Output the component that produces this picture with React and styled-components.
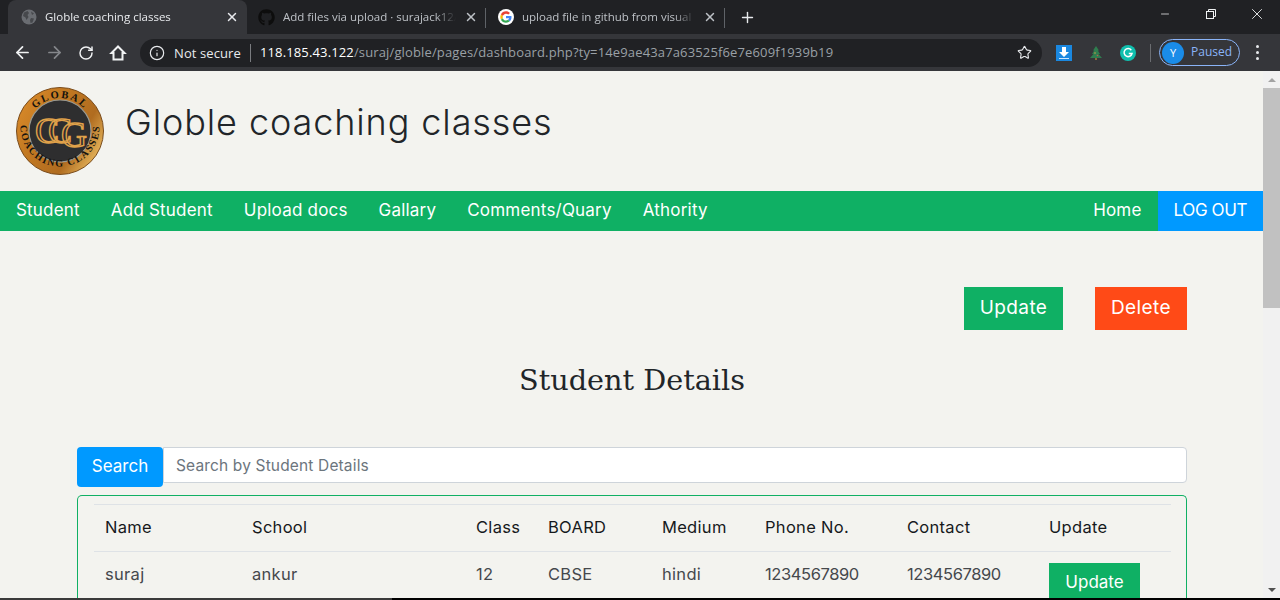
import React from "react"
import styled, { createGlobalStyle } from "styled-components"
import { ArrowLeft, ArrowRight, RotateCw, Star, Info, X, Plus, Minus } from "lucide-react"
import { FaGithub } from "react-icons/fa"

const sans = `Inter, "Noto Sans", sans-serif`
const chromeFont = `"Open Sans", "Noto Sans", sans-serif`

const GlobalStyle = createGlobalStyle`
  html, body {
    margin: 0;
    padding: 0;
    height: 600px;
    overflow: hidden;
    background: #f3f3ef;
  }
  * { box-sizing: border-box; }
`

const Screen = styled.div`
  width: 1280px;
  height: 600px;
  display: flex;
  flex-direction: column;
  overflow: hidden;
`

const TabStrip = styled.div`
  height: 34px;
  flex: none;
  background: #202124;
  display: flex;
  align-items: stretch;
  padding-left: 8px;
  font-family: ${chromeFont};
  font-size: 11.5px;
`

const Tab = styled.div`
  width: ${p => p.$width}px;
  flex: none;
  display: flex;
  align-items: center;
  gap: 8px;
  padding: 0 8px 0 ${p => p.$left}px;
  color: ${p => (p.$active ? "#e8eaed" : "#bdc1c6")};
  background: ${p => (p.$active ? "#35363a" : "transparent")};
  border-radius: 8px 8px 0 0;
  position: relative;
  &::after {
    content: "";
    display: ${p => (p.$divider ? "block" : "none")};
    position: absolute;
    right: 0;
    top: 8px;
    width: 1px;
    height: 20px;
    background: #5f6368;
  }
`

const TabTitle = styled.span`
  flex: 1;
  padding-bottom: 2px;
  white-space: nowrap;
  overflow: hidden;
  -webkit-mask-image: linear-gradient(to right, #000 88%, transparent);
  mask-image: linear-gradient(to right, #000 88%, transparent);
`

const NewTab = styled.div`
  width: 44px;
  display: flex;
  align-items: center;
  justify-content: center;
  color: #e8eaed;
`

const WindowControls = styled.div`
  margin-left: auto;
  display: flex;
  align-items: flex-start;
  color: #f1f3f4;
`

const WindowButton = styled.div`
  width: 46px;
  height: 28px;
  display: flex;
  align-items: center;
  justify-content: center;
`

const Toolbar = styled.div`
  height: 37px;
  flex: none;
  background: #35363a;
  display: flex;
  align-items: center;
  padding: 0 0 0 6px;
  font-family: ${chromeFont};
  color: #e8eaed;
`

const NavIcon = styled.div`
  width: 32px;
  height: 28px;
  display: flex;
  align-items: center;
  justify-content: center;
  color: ${p => (p.$muted ? "#85878b" : "#f1f3f4")};
`

const Omnibox = styled.div`
  width: 902px;
  height: 28px;
  margin-left: 6px;
  background: #202124;
  border-radius: 14px;
  display: flex;
  align-items: center;
  padding: 0 10px 0 9px;
  font-size: 13px;
  white-space: nowrap;
`

const Secure = styled.span`
  margin-left: 9px;
  padding-right: 9px;
  border-right: 1px solid #7a7c80;
  line-height: 18px;
  letter-spacing: 0.1px;
`

const Url = styled.span`
  margin-left: 9px;
  padding-bottom: 2px;
  color: #9aa0a6;
  flex: 1;
  letter-spacing: 0.14px;
  b { color: #fff; font-weight: 400; }
`

const Extensions = styled.div`
  display: flex;
  align-items: center;
  margin-left: 6px;
`

const ExtSlot = styled.div`
  width: 32px;
  height: 28px;
  display: flex;
  align-items: center;
  justify-content: center;
`

const ToolbarDivider = styled.div`
  width: 1px;
  height: 18px;
  background: #6b6d71;
  margin: 0 8px 0 6px;
`

const Profile = styled.div`
  width: 81px;
  height: 27px;
  border: 1px solid #8ab4f8;
  border-radius: 14px;
  display: flex;
  align-items: center;
  padding-left: 2px;
  font-size: 12px;
  color: #8ab4f8;
`

const PausedLabel = styled.span`
  padding-bottom: 2px;
`

const Avatar = styled.div`
  width: 22px;
  height: 22px;
  border-radius: 50%;
  background: #1a8ce8;
  color: #fff;
  display: flex;
  align-items: center;
  justify-content: center;
  font-size: 11px;
  margin-right: 7px;
`

const MenuDots = styled.div`
  margin-left: 16px;
  display: flex;
  flex-direction: column;
  gap: 3px;
  span {
    width: 3px;
    height: 3px;
    background: #e8eaed;
    border-radius: 50%;
  }
`

const Viewport = styled.div`
  flex: 1;
  min-height: 0;
  display: flex;
  overflow: hidden;
`

const Page = styled.div`
  flex: 1;
  min-width: 0;
  background: #f3f3ef;
  font-family: ${sans};
  color: #212529;
`

const Header = styled.header`
  height: 120px;
  display: flex;
  align-items: center;
  padding: 0 0 0 16px;
  gap: 21px;
`

const Title = styled.h1`
  margin: 0 0 16px;
  font-size: 36px;
  font-weight: 300;
  letter-spacing: 0.9px;
  line-height: 1.2;
`

const NavBar = styled.nav`
  height: 40px;
  background: #0fb064;
  display: flex;
  align-items: stretch;
  font-size: 17px;
  letter-spacing: 0.2px;
  color: #fff;
`

const NavLink = styled.a`
  display: flex;
  align-items: center;
  padding: 0 16px 2px;
  margin-right: ${p => (p.$primary || p.$push ? "0" : "-1px")};
  color: #fff;
  background: ${p => (p.$primary ? "#0099ff" : "transparent")};
  margin-left: ${p => (p.$push ? "auto" : "0")};
  letter-spacing: ${p => (p.$primary ? "-0.4px" : "inherit")};
`

const Content = styled.main`
  width: 1110px;
  margin-left: 77px;
`

const Actions = styled.div`
  display: flex;
  justify-content: flex-end;
  gap: 32px;
  padding-top: 56px;
`

const Button = styled.button`
  border: 0;
  height: ${p => p.$height || 43}px;
  width: ${p => p.$width}px;
  background: ${p => p.$bg || "#0fb064"};
  color: #fff;
  font-family: ${sans};
  font-size: 19px;
  letter-spacing: 0.4px;
  padding: 0 0 2px;
`

const Heading = styled.h2`
  margin: 29px 0 0;
  height: 88px;
  text-align: center;
  font-family: "DejaVu Serif", serif;
  font-weight: 400;
  font-size: 28.7px;
  line-height: 42px;
  color: #212529;
`

const SearchRow = styled.div`
  display: flex;
  align-items: flex-start;
`

const SearchButton = styled.button`
  width: 86px;
  height: 40px;
  border: 0;
  border-radius: 4px;
  background: #0099ff;
  color: #fff;
  font-family: ${sans};
  font-size: 17px;
  padding: 0 0 3px;
`

const SearchInput = styled.input`
  flex: 1;
  height: 36px;
  border: 1px solid #ced4da;
  border-radius: 0 4px 4px 0;
  background: #fff;
  padding: 0 12px;
  font-family: ${sans};
  font-size: 15.5px;
  letter-spacing: 0.15px;
  outline: 0;
  &::placeholder { color: #6c757d; opacity: 1; }
`

const Card = styled.section`
  margin-top: 8px;
  height: 130px;
  border: 1px solid #0fb064;
  border-bottom: 0;
  border-radius: 5px 5px 0 0;
  padding: 8px 15px 0 16px;
`

const Table = styled.table`
  width: 1077px;
  table-layout: fixed;
  border-collapse: collapse;
  font-size: 16.5px;
`

const HeadCell = styled.th`
  width: ${p => p.$width}px;
  height: 47px;
  padding: 0 0 3px 11px;
  text-align: left;
  font-weight: 400;
  letter-spacing: 0.3px;
  color: #16191c;
  border-top: 1px solid #dee2e6;
  border-bottom: 1px solid #dee2e6;
`

const Cell = styled.td`
  padding: 10px 0 0 11px;
  vertical-align: top;
  color: #45484c;
  line-height: 24px;
  letter-spacing: ${p => (p.$digits ? "-0.4px" : "0.3px")};
`

const RowButton = styled(Button)`
  display: block;
  margin-top: 1px;
  font-size: 17px;
  letter-spacing: 0;
  padding: 0;
`

const Scrollbar = styled.div`
  width: 17px;
  flex: none;
  background: #f1f1f1;
  display: flex;
  flex-direction: column;
  align-items: center;
`

const ScrollArrow = styled.div`
  height: 17px;
  flex: none;
  display: flex;
  align-items: center;
  justify-content: center;
  &::before {
    content: "";
    border-left: 4px solid transparent;
    border-right: 4px solid transparent;
    border-bottom: ${p => (p.$down ? "0" : "4px solid #a3a3a3")};
    border-top: ${p => (p.$down ? "4px solid #505050" : "0")};
  }
`

const ScrollThumb = styled.div`
  width: 100%;
  height: 220px;
  background: #c1c1c1;
`

const ScrollTrack = styled.div`
  flex: 1;
`

const BottomEdge = styled.div`
  height: 2px;
  flex: none;
  background: #000;
  &::before {
    content: "";
    display: block;
    width: 392px;
    height: 2px;
    background: #3a3a3a;
  }
`

const GlobeIcon = () => (
  <svg width="16" height="16" viewBox="0 0 16 16">
    <circle cx="8" cy="8" r="7.500" fill="#6a6d72" />
    <path fill="#46484c" d="M3 3.500l3.500-1.500 1.500 2-1.500 2 1 2-2 3-1-2.500-2.500-1.500zM10 9l3 .5-1.500 4-2 .5-.5-3zM10 2.500l3 2-2 1.500z" />
  </svg>
)

const GoogleIcon = () => (
  <svg width="16" height="16" viewBox="0 0 48 48">
    <circle cx="24" cy="24" r="24" fill="#fff" />
    <path fill="#EA4335" d="M24 14c2.700 0 5 .9 6.900 2.700l5-5C32.800 8.700 28.800 7 24 7 17.300 7 11.600 10.800 8.800 16.400l5.800 4.500C16 16.900 19.700 14 24 14z" />
    <path fill="#4285F4" d="M40.500 24.500c0-1.200-.1-2.300-.3-3.500H24v6.500h9.300c-.4 2.100-1.600 3.900-3.400 5.100l5.600 4.300c3.200-3 5-7.400 5-12.400z" />
    <path fill="#FBBC05" d="M14.600 27.100c-.3-1-.5-2-.5-3.100s.2-2.100.5-3.100l-5.800-4.500C7.600 18.700 7 21.300 7 24s.6 5.300 1.800 7.600l5.800-4.500z" />
    <path fill="#34A853" d="M24 41c4.600 0 8.500-1.500 11.500-4.100l-5.600-4.300c-1.600 1-3.600 1.700-5.900 1.700-4.300 0-8-2.900-9.400-6.900l-5.800 4.500C11.600 37.200 17.300 41 24 41z" />
  </svg>
)

const HomeIcon = () => (
  <svg width="18" height="18" viewBox="0 0 18 18" fill="none" stroke="currentColor" strokeWidth="2" strokeLinejoin="miter">
    <path d="M9 2.500L2.500 9H4.500V15.500H13.500V9H15.500Z" />
  </svg>
)

const RestoreIcon = () => (
  <svg width="12" height="12" viewBox="0 0 12 12" fill="none" stroke="currentColor" strokeWidth="1">
    <rect x="1.500" y="3.500" width="7" height="7" />
    <path d="M3.500 3.500V1.500h7v7H8.500" />
  </svg>
)

const DownloadIcon = () => (
  <svg width="16" height="16" viewBox="0 0 16 16">
    <rect width="16" height="16" fill="#1a88e0" />
    <path fill="#fff" d="M6 2h4v5h3l-5 5-5-5h3z" />
    <rect x="3" y="13" width="10" height="1" fill="#cfe8ff" />
  </svg>
)

const TreeIcon = () => (
  <svg width="14" height="16" viewBox="0 0 14 16">
    <path fill="#2f7d4f" d="M7 1l3 4.500H8.800L11 9H9.500L13 13H1l3.500-4H3l2.200-3.500H4z" />
    <rect x="6" y="13" width="2" height="2" fill="#8a6a3a" />
    <circle cx="6" cy="8" r=".8" fill="#c9a04a" />
    <circle cx="8.500" cy="10.500" r=".8" fill="#c05a4a" />
  </svg>
)

const GrammarlyIcon = () => (
  <svg width="16" height="16" viewBox="0 0 16 16">
    <circle cx="8" cy="8" r="8" fill="#10bfae" />
    <path fill="none" stroke="#fff" strokeWidth="1.500" d="M11.300 5.200A4 4 0 1 0 12 8.500H8.800" />
  </svg>
)

const Logo = () => (
  <svg width="88" height="88" viewBox="0 0 88 88">
    <defs>
      <linearGradient id="rim" x1="0" y1="0.2" x2="1" y2="0.8">
        <stop offset="0%" stopColor="#d98a2a" />
        <stop offset="30%" stopColor="#c47a22" />
        <stop offset="70%" stopColor="#b06c20" />
        <stop offset="100%" stopColor="#efc266" />
      </linearGradient>
      <path id="topArc" d="M11 44a33 33 0 0 1 66 0" />
      <path id="bottomArc" d="M4.500 40a39.500 39.500 0 0 0 79 0" />
    </defs>
    <circle cx="44" cy="44" r="43.500" fill="url(#rim)" stroke="#7a4c1c" strokeWidth="1" />
    <circle cx="44" cy="44" r="31" fill="#2e2e2f" stroke="#9a9a92" strokeWidth="1.200" />
    <text fontFamily="Liberation Serif, serif" fontWeight="700" fontSize="10.500" fill="#14120e" letterSpacing="1.800">
      <textPath href="#topArc" startOffset="50%" textAnchor="middle">GLOBAL</textPath>
    </text>
    <text fontFamily="Liberation Serif, serif" fontWeight="700" fontSize="10" fill="#14120e" letterSpacing="1.500">
      <textPath href="#bottomArc" startOffset="50%" textAnchor="middle">COACHING CLASSES</textPath>
    </text>
    <g fontFamily="Liberation Serif, serif" fontSize="36" fill="none" stroke="#e0a24a" strokeWidth="1.400">
      <text x="19" y="56">C</text>
      <text x="32" y="56">C</text>
      <text x="45" y="60">G</text>
    </g>
  </svg>
)

const columns = [
  ["Name", 147, "suraj"],
  ["School", 224, "ankur"],
  ["Class", 72, "12"],
  ["BOARD", 114, "CBSE"],
  ["Medium", 103, "hindi"],
  ["Phone No.", 142, "1234567890", true],
  ["Contact", 142, "1234567890", true],
]

const App = () => {
  return (
    <Screen>
      <GlobalStyle />
      <TabStrip>
        <Tab $active $width={239} $left={13}>
          <GlobeIcon />
          <TabTitle>Globle coaching classes</TabTitle>
          <X size={14} strokeWidth={2.500} color="#e8eaed" />
        </Tab>
        <Tab $width={239} $left={11} $divider>
          <FaGithub size={17} color="#0d0d0d" />
          <TabTitle>Add files via upload · surajack12/</TabTitle>
          <X size={14} strokeWidth={2.500} />
        </Tab>
        <Tab $width={239} $left={12} $divider>
          <GoogleIcon />
          <TabTitle>upload file in github from visual studio</TabTitle>
          <X size={14} strokeWidth={2.500} />
        </Tab>
        <NewTab>
          <Plus size={17} strokeWidth={2} />
        </NewTab>
        <WindowControls>
          <WindowButton><Minus size={12} strokeWidth={1.500} /></WindowButton>
          <WindowButton><RestoreIcon /></WindowButton>
          <WindowButton><X size={18} strokeWidth={1.200} /></WindowButton>
        </WindowControls>
      </TabStrip>
      <Toolbar>
        <NavIcon><ArrowLeft size={19} strokeWidth={2.200} /></NavIcon>
        <NavIcon $muted><ArrowRight size={19} strokeWidth={2.200} /></NavIcon>
        <NavIcon><RotateCw size={16} strokeWidth={2.200} /></NavIcon>
        <NavIcon><HomeIcon /></NavIcon>
        <Omnibox>
          <Info size={16} strokeWidth={1.800} />
          <Secure>Not secure</Secure>
          <Url><b>118.185.43.122</b>/suraj/globle/pages/dashboard.php?ty=14e9ae43a7a63525f6e7e609f1939b19</Url>
          <Star size={15} strokeWidth={1.800} />
        </Omnibox>
        <Extensions>
          <ExtSlot><DownloadIcon /></ExtSlot>
          <ExtSlot><TreeIcon /></ExtSlot>
          <ExtSlot><GrammarlyIcon /></ExtSlot>
        </Extensions>
        <ToolbarDivider />
        <Profile>
          <Avatar>Y</Avatar>
          <PausedLabel>Paused</PausedLabel>
        </Profile>
        <MenuDots><span /><span /><span /></MenuDots>
      </Toolbar>
      <Viewport>
        <Page>
          <Header>
            <Logo />
            <Title>Globle coaching classes</Title>
          </Header>
          <NavBar>
            <NavLink>Student</NavLink>
            <NavLink>Add Student</NavLink>
            <NavLink>Upload docs</NavLink>
            <NavLink>Gallary</NavLink>
            <NavLink>Comments/Quary</NavLink>
            <NavLink>Athority</NavLink>
            <NavLink $push>Home</NavLink>
            <NavLink $primary>LOG OUT</NavLink>
          </NavBar>
          <Content>
            <Actions>
              <Button $width={99}>Update</Button>
              <Button $width={92} $bg="#ff4a17">Delete</Button>
            </Actions>
            <Heading>Student Details</Heading>
            <SearchRow>
              <SearchButton>Search</SearchButton>
              <SearchInput placeholder="Search by Student Details" />
            </SearchRow>
            <Card>
              <Table>
                <thead>
                  <tr>
                    {columns.map(([label, width]) => (
                      <HeadCell key={label} $width={width}>{label}</HeadCell>
                    ))}
                    <HeadCell $width={133}>Update</HeadCell>
                  </tr>
                </thead>
                <tbody>
                  <tr>
                    {columns.map(([label, , value, digits]) => (
                      <Cell key={label} $digits={digits}>{value}</Cell>
                    ))}
                    <Cell><RowButton $width={91} $height={38}>Update</RowButton></Cell>
                  </tr>
                </tbody>
              </Table>
            </Card>
          </Content>
        </Page>
        <Scrollbar>
          <ScrollArrow />
          <ScrollThumb />
          <ScrollTrack />
          <ScrollArrow $down />
        </Scrollbar>
      </Viewport>
      <BottomEdge />
    </Screen>
  )
}

export default App
